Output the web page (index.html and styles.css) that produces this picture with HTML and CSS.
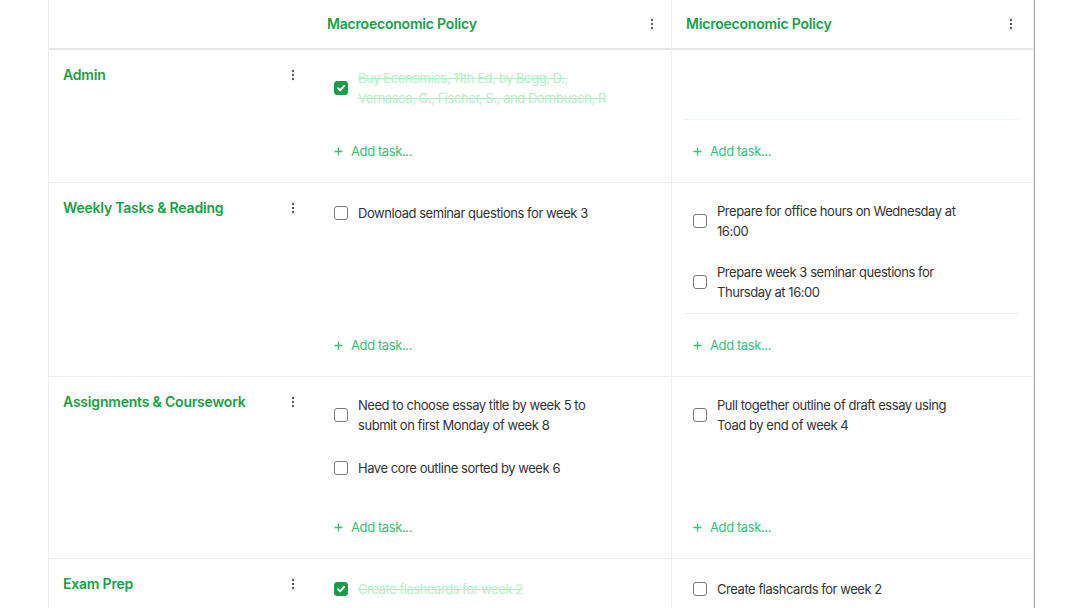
FILE: index.html
```html
<!DOCTYPE html>
<html>
<head>
<meta charset="utf-8">
<link rel="stylesheet" href="styles.css">
</head>
<body>
<div class="board">
  <div class="cell head-empty"></div>
  <div class="cell col-head">
    <span class="col-title">Macroeconomic Policy</span>
    <svg class="kebab" viewBox="0 0 4 12" width="4" height="12"><circle cx="2" cy="2" r="1.2"/><circle cx="2" cy="6" r="1.2"/><circle cx="2" cy="10" r="1.2"/></svg>
  </div>
  <div class="cell col-head col-last">
    <span class="col-title">Microeconomic Policy</span>
    <svg class="kebab" viewBox="0 0 4 12" width="4" height="12"><circle cx="2" cy="2" r="1.2"/><circle cx="2" cy="6" r="1.2"/><circle cx="2" cy="10" r="1.2"/></svg>
  </div>

  <!-- Row: Admin -->
  <div class="cell label-cell">
    <span class="row-title">Admin</span>
    <svg class="kebab" viewBox="0 0 4 12" width="4" height="12"><circle cx="2" cy="2" r="1.2"/><circle cx="2" cy="6" r="1.2"/><circle cx="2" cy="10" r="1.2"/></svg>
  </div>
  <div class="cell task-cell">
    <div class="list">
      <div class="item done">
        <span class="box checked"><svg viewBox="0 0 14 14" width="14" height="14"><path d="M3.4 7.2 L6 9.7 L10.6 4.4" /></svg></span>
        <span class="text">Buy Economics, 11th Ed, by Begg, D.,<br>Vernasca, G., Fischer, S., and Dornbusch, R</span>
      </div>
    </div>
    <div class="add"><svg class="plus" viewBox="0 0 9 9" width="9" height="9"><path d="M4.5 0.5 V8.5 M0.5 4.5 H8.5"/></svg>Add task...</div>
  </div>
  <div class="cell task-cell col-last">
    <div class="list empty line-teal"></div>
    <div class="add"><svg class="plus" viewBox="0 0 9 9" width="9" height="9"><path d="M4.5 0.5 V8.5 M0.5 4.5 H8.5"/></svg>Add task...</div>
  </div>

  <!-- Row: Weekly -->
  <div class="cell label-cell">
    <span class="row-title">Weekly Tasks &amp; Reading</span>
    <svg class="kebab" viewBox="0 0 4 12" width="4" height="12"><circle cx="2" cy="2" r="1.2"/><circle cx="2" cy="6" r="1.2"/><circle cx="2" cy="10" r="1.2"/></svg>
  </div>
  <div class="cell task-cell">
    <div class="list line-faint">
      <div class="item">
        <span class="box"></span>
        <span class="text">Download seminar questions for week 3</span>
      </div>
    </div>
    <div class="add"><svg class="plus" viewBox="0 0 9 9" width="9" height="9"><path d="M4.5 0.5 V8.5 M0.5 4.5 H8.5"/></svg>Add task...</div>
  </div>
  <div class="cell task-cell col-last">
    <div class="list line-gray">
      <div class="item">
        <span class="box"></span>
        <span class="text">Prepare for office hours on Wednesday at<br>16:00</span>
      </div>
      <div class="item">
        <span class="box"></span>
        <span class="text">Prepare week 3 seminar questions for<br>Thursday at 16:00</span>
      </div>
    </div>
    <div class="add"><svg class="plus" viewBox="0 0 9 9" width="9" height="9"><path d="M4.5 0.5 V8.5 M0.5 4.5 H8.5"/></svg>Add task...</div>
  </div>

  <!-- Row: Assignments -->
  <div class="cell label-cell">
    <span class="row-title">Assignments &amp; Coursework</span>
    <svg class="kebab" viewBox="0 0 4 12" width="4" height="12"><circle cx="2" cy="2" r="1.2"/><circle cx="2" cy="6" r="1.2"/><circle cx="2" cy="10" r="1.2"/></svg>
  </div>
  <div class="cell task-cell">
    <div class="list tall">
      <div class="item">
        <span class="box"></span>
        <span class="text">Need to choose essay title by week 5 to<br>submit on first Monday of week 8</span>
      </div>
      <div class="item">
        <span class="box"></span>
        <span class="text">Have core outline sorted by week 6</span>
      </div>
    </div>
    <div class="add"><svg class="plus" viewBox="0 0 9 9" width="9" height="9"><path d="M4.5 0.5 V8.5 M0.5 4.5 H8.5"/></svg>Add task...</div>
  </div>
  <div class="cell task-cell col-last">
    <div class="list">
      <div class="item">
        <span class="box"></span>
        <span class="text">Pull together outline of draft essay using<br>Toad by end of week 4</span>
      </div>
    </div>
    <div class="add"><svg class="plus" viewBox="0 0 9 9" width="9" height="9"><path d="M4.5 0.5 V8.5 M0.5 4.5 H8.5"/></svg>Add task...</div>
  </div>

  <!-- Row: Exam Prep -->
  <div class="cell label-cell">
    <span class="row-title">Exam Prep</span>
    <svg class="kebab" viewBox="0 0 4 12" width="4" height="12"><circle cx="2" cy="2" r="1.2"/><circle cx="2" cy="6" r="1.2"/><circle cx="2" cy="10" r="1.2"/></svg>
  </div>
  <div class="cell task-cell">
    <div class="list">
      <div class="item done">
        <span class="box checked"><svg viewBox="0 0 14 14" width="14" height="14"><path d="M3.4 7.2 L6 9.7 L10.6 4.4" /></svg></span>
        <span class="text">Create flashcards for week 2</span>
      </div>
    </div>
    <div class="add"><svg class="plus" viewBox="0 0 9 9" width="9" height="9"><path d="M4.5 0.5 V8.5 M0.5 4.5 H8.5"/></svg>Add task...</div>
  </div>
  <div class="cell task-cell col-last">
    <div class="list">
      <div class="item">
        <span class="box"></span>
        <span class="text">Create flashcards for week 2</span>
      </div>
    </div>
    <div class="add"><svg class="plus" viewBox="0 0 9 9" width="9" height="9"><path d="M4.5 0.5 V8.5 M0.5 4.5 H8.5"/></svg>Add task...</div>
  </div>
</div>
</body>
</html>
```

FILE: styles.css
```css
* { box-sizing: border-box; }
html, body {
  margin: 0;
  padding: 0;
  background: #fff;
  height: 608px;
  overflow: hidden;
}
body {
  font-family: Inter, "Noto Sans", "Liberation Sans", sans-serif;
  font-size: 13px;
  color: #333;
}
.board {
  margin-left: 48px;
  width: 986px;
  display: grid;
  grid-template-columns: 264px 358px 1fr;
  border-left: 1px solid #ececec;
  border-right: 1px solid #ededed;
  box-shadow: 1px 0 0 #a9a9a9;
  min-height: 608px;
}
.cell {
  border-bottom: 1px solid #eeeeee;
}
.col-last {
  border-left: 1px solid #eeeeee;
}
.head-empty,
.col-head {
  height: 50px;
  border-bottom: 2px solid #e6e6e6;
}
.col-head {
  display: flex;
  align-items: center;
  justify-content: space-between;
  padding: 0 17px 0 14px;
}
.col-head.col-last {
  padding-right: 20px;
}
.col-title,
.row-title {
  font-size: 14px;
  font-weight: 600;
  color: #17a046;
  line-height: 20px;
  letter-spacing: -0.2px;
}
.kebab {
  fill: #5f5f5f;
  flex: none;
}
.label-cell {
  display: flex;
  justify-content: space-between;
  align-items: flex-start;
  padding: 15px 18px 0 14px;
}
.label-cell .kebab {
  margin-top: 4px;
}
.task-cell {
  display: flex;
  flex-direction: column;
}
.list {
  flex: 1;
  margin: 0 15px 0 11px;
  padding-top: 8px;
  border-bottom: 1px solid transparent;
}
.list.empty {
  min-height: 69px;
}
.list.tall {
  padding-bottom: 4px;
}
.line-teal { border-bottom-color: #e9f6f1; }
.line-gray { border-bottom-color: #ececec; }
.line-faint { border-bottom-color: #fbfbfb; }
.item {
  display: flex;
  align-items: center;
  padding: 10px 0 10px 10px;
  margin-bottom: 1px;
  min-height: 44px;
}
.box {
  flex: none;
  width: 14px;
  height: 14px;
  border: 1px solid #7a7a7a;
  border-radius: 3px;
  margin-right: 10px;
  display: flex;
  align-items: center;
  justify-content: center;
  background: #fff;
}
.box.checked {
  background: #1a9c48;
  border-color: #1a9c48;
}
.box svg {
  fill: none;
  stroke: #fff;
  stroke-width: 2.2;
  stroke-linecap: round;
  stroke-linejoin: round;
}
.text {
  line-height: 20px;
  color: #333;
  letter-spacing: -0.45px;
}
.item.done .text {
  color: #b6edc7;
  text-decoration: line-through;
}
.add {
  flex: none;
  height: 62px;
  display: flex;
  align-items: center;
  padding-left: 21px;
  color: #3bbd7c;
  font-size: 13px;
  letter-spacing: -0.4px;
}
.plus {
  flex: none;
  margin-right: 8px;
  fill: none;
  stroke: #3bbd7c;
  stroke-width: 1.3;
}
```
